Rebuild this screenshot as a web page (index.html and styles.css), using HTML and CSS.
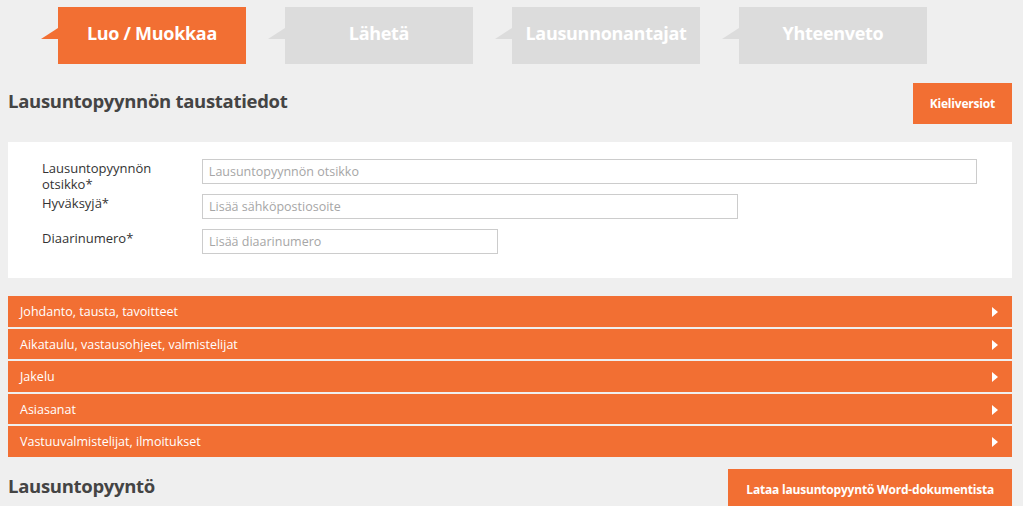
FILE: index.html
```html
<!DOCTYPE html>
<html lang="fi">
  <head>
    <meta charset="UTF-8" />
    <meta name="viewport" content="width=device-width, initial-scale=1.0" />
    <title>Lausuntopyyntö</title>
    <link rel="stylesheet" href="styles.css">
  </head>
  <body>
    <nav class="steps">
      <div class="step active">Luo / Muokkaa</div>
      <div class="step">Lähetä</div>
      <div class="step">Lausunnonantajat</div>
      <div class="step">Yhteenveto</div>
    </nav>

    <div class="section-head">
      <h2>Lausuntopyynnön taustatiedot</h2>
      <button class="btn">Kieliversiot</button>
    </div>

    <form class="card">
      <div class="field">
        <label for="title">Lausuntopyynnön otsikko*</label>
        <input type="text" id="title" class="wide" placeholder="Lausuntopyynnön otsikko" />
      </div>
      <div class="field">
        <label for="approver">Hyväksyjä*</label>
        <input type="text" id="approver" class="medium" placeholder="Lisää sähköpostiosoite" />
      </div>
      <div class="field">
        <label for="diary">Diaarinumero*</label>
        <input type="text" id="diary" class="short" placeholder="Lisää diaarinumero" />
      </div>
    </form>

    <div class="accordion">
      <div class="acc-row">Johdanto, tausta, tavoitteet<span class="arrow"></span></div>
      <div class="acc-row">Aikataulu, vastausohjeet, valmistelijat<span class="arrow"></span></div>
      <div class="acc-row">Jakelu<span class="arrow"></span></div>
      <div class="acc-row">Asiasanat<span class="arrow"></span></div>
      <div class="acc-row">Vastuuvalmistelijat, ilmoitukset<span class="arrow"></span></div>
    </div>

    <div class="section-head bottom">
      <h2>Lausuntopyyntö</h2>
      <button class="btn big">Lataa lausuntopyyntö Word-dokumentista</button>
    </div>
  </body>
</html>
```

FILE: styles.css
```css
body {
  margin: 0;
  padding: 7px 11px 0 8px;
  background-color: #efefef;
  font-family: "Open Sans", "Noto Sans", sans-serif;
  color: #444;
  overflow: hidden;
}
.steps {
  display: flex;
  gap: 39px;
  padding-left: 50px;
}
.step {
  position: relative;
  width: 188px;
  height: 57px;
  line-height: 53px;
  text-align: center;
  background-color: #dcdcdc;
  color: #fff;
  font-size: 18px;
  font-weight: 700;
  letter-spacing: -0.3px;
}
.step::before {
  content: "";
  position: absolute;
  left: -17px;
  top: 21px;
  border-style: solid;
  border-width: 0 0 11px 17px;
  border-color: transparent transparent #dcdcdc transparent;
}
.step.active {
  background-color: #f26f33;
}
.step.active::before {
  border-bottom-color: #f26f33;
}
.section-head {
  display: flex;
  justify-content: space-between;
  align-items: flex-start;
  margin-top: 19px;
}
.section-head h2 {
  margin: 5px 0 0;
  font-size: 18.5px;
  font-weight: 700;
  letter-spacing: -0.3px;
}
.btn {
  border: none;
  background-color: #f26f33;
  color: #fff;
  font-family: inherit;
  font-size: 12px;
  font-weight: 700;
  height: 41px;
  padding: 0 17px;
  letter-spacing: -0.2px;
}
.btn.big {
  padding: 0 18px;
}
.card {
  margin-top: 18px;
  background-color: #fff;
  padding: 17px 35px 24px 34px;
  display: flex;
  flex-direction: column;
  gap: 10px;
}
.field {
  display: flex;
  align-items: flex-start;
  height: 25px;
}
.field label {
  width: 130px;
  margin-right: 30px;
  padding-top: 1px;
  font-size: 13px;
  line-height: 16px;
  color: #333;
}
.field input {
  height: 25px;
  box-sizing: border-box;
  border: 1px solid #ccc;
  padding: 0 6px;
  font-family: inherit;
  font-size: 12.5px;
  color: #333;
}
.field input::placeholder {
  color: #a6a6a6;
}
.field input.wide {
  width: 776px;
}
.field input.medium {
  width: 536px;
}
.field input.short {
  width: 296px;
}
.accordion {
  margin-top: 18px;
  display: flex;
  flex-direction: column;
  gap: 2px;
}
.acc-row {
  position: relative;
  height: 30.6px;
  line-height: 31px;
  padding-left: 12px;
  background-color: #f26f33;
  color: #fff;
  font-size: 12.5px;
}
.arrow {
  position: absolute;
  right: 14px;
  top: 11px;
  border-style: solid;
  border-width: 5px 0 5px 6px;
  border-color: transparent transparent transparent #fff;
}
.section-head.bottom {
  margin-top: 12px;
}
.section-head.bottom h2 {
  margin-top: 4px;
}
```
